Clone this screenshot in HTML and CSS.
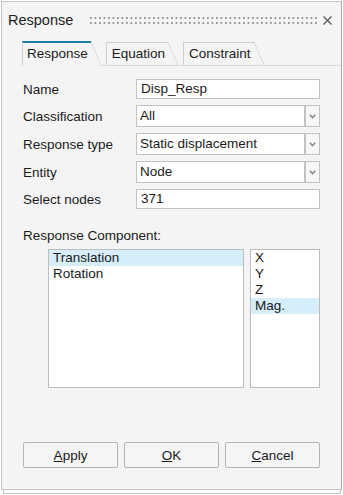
FILE: index.html
```html
<!DOCTYPE html>
<html lang="en">
<head>
  <meta charset="UTF-8" />
  <title>Response</title>
  <link rel="stylesheet" href="styles.css">
</head>
<body>
<div class="window">
  <div class="titlebar">
    <span class="title">Response</span>
    <span class="grip"></span>
    <svg class="close" width="9" height="9" viewBox="0 0 9 9">
      <path d="M0.5 0.5 L8.5 8.5 M8.5 0.5 L0.5 8.5" stroke="#555" stroke-width="1.2" fill="none"/>
    </svg>
  </div>

  <div class="tabs">
    <div class="tab active">Response</div>
    <div class="tab">Equation</div>
    <div class="tab">Constraint</div>
  </div>

  <div class="form">
    <label>Name</label>
    <div class="input">Disp_Resp</div>

    <label>Classification</label>
    <div class="select">
      <div class="select-box">All</div>
      <div class="select-btn"><svg width="7" height="5" viewBox="0 0 7 5"><path d="M0.8 0.8 L3.5 3.6 L6.2 0.8" stroke="#8c8c8c" stroke-width="1.6" fill="none"/></svg></div>
    </div>

    <label>Response type</label>
    <div class="select">
      <div class="select-box">Static displacement</div>
      <div class="select-btn"><svg width="7" height="5" viewBox="0 0 7 5"><path d="M0.8 0.8 L3.5 3.6 L6.2 0.8" stroke="#8c8c8c" stroke-width="1.6" fill="none"/></svg></div>
    </div>

    <label>Entity</label>
    <div class="select">
      <div class="select-box">Node</div>
      <div class="select-btn"><svg width="7" height="5" viewBox="0 0 7 5"><path d="M0.8 0.8 L3.5 3.6 L6.2 0.8" stroke="#8c8c8c" stroke-width="1.6" fill="none"/></svg></div>
    </div>

    <label>Select nodes</label>
    <div class="input">371</div>
  </div>

  <div class="comp-label">Response Component:</div>
  <div class="lists">
    <ul class="list list-main">
      <li class="selected">Translation</li>
      <li>Rotation</li>
    </ul>
    <ul class="list list-dir">
      <li>X</li>
      <li>Y</li>
      <li>Z</li>
      <li class="selected">Mag.</li>
    </ul>
  </div>

  <div class="buttons">
    <button><u>A</u>pply</button>
    <button><u>O</u>K</button>
    <button><u>C</u>ancel</button>
  </div>
</div>
<div class="under"></div>
</body>
</html>
```

FILE: styles.css
```css
body {
  margin: 0;
  background: #fff;
  font-family: "Liberation Sans", Arial, sans-serif;
  font-size: 13.5px;
  color: #1a1a1a;
}
.window {
  box-sizing: border-box;
  margin: 1px 0 0 1px;
  width: 341px;
  height: 489px;
  background: #f4f4f4;
  border: 1px solid #c4c4c4;
  border-right-color: #a9a9a9;
}

.titlebar {
  display: flex;
  align-items: center;
  height: 35px;
  padding: 0 9px 0 6px;
}
.title { font-size: 14.5px; color: #222; }
.grip {
  flex: 1;
  height: 7px;
  margin: 2px 6px 0 17px;
  background-image: conic-gradient(at 2px 2px, transparent 75%, #9a9a9a 0);
  background-size: 4.5px 5px;
}
.close { display: block; margin-top: 1px; }

.tabs {
  display: flex;
  margin: 5px 0 0 20px;
  border-bottom: 1px solid #dadada;
}
.tab {
  position: relative;
  height: 22px;
  line-height: 22px;
  padding: 0 3px 0 5px;
  margin-right: 15px;
  border-top: 1px solid #cfcfcf;
  border-left: 1px solid #cfcfcf;
}
.tab::after {
  content: '';
  position: absolute;
  top: -1px;
  right: -10px;
  bottom: 0;
  width: 10px;
  background: linear-gradient(to top right, transparent calc(50% - 0.6px), #cfcfcf 50%, transparent calc(50% + 0.6px));
}
.tab.active {
  height: 22px;
  line-height: 22px;
  padding-left: 4px;
  border-top: 2px solid #1d7fa6;
  margin-bottom: -1px;
  border-bottom: 1px solid #f4f4f4;
  margin-top: -1px;
}
.tab.active::after {
  top: -2px;
  bottom: -1px;
  background: linear-gradient(to top right, transparent calc(50% - 0.6px), #cfcfcf 50%, transparent calc(50% + 0.6px)),
              linear-gradient(#f4f4f4, #f4f4f4) left bottom / 100% 1px no-repeat;
}

.form {
  display: grid;
  grid-template-columns: 113px 1fr;
  row-gap: 6px;
  align-items: center;
  margin-top: 13px;
  padding: 0 21px;
}
.input {
  box-sizing: border-box;
  height: 20px;
  line-height: 18px;
  padding-left: 4px;
  background: #fff;
  border: 1px solid #c2c2c2;
}
.select {
  display: flex;
  height: 22px;
}
.select-box {
  flex: 1;
  line-height: 20px;
  padding-left: 3px;
  background: #fff;
  border: 1px solid #c2c2c2;
}
.select-btn {
  box-sizing: border-box;
  width: 15px;
  display: flex;
  align-items: center;
  justify-content: center;
  background: #f7f7f7;
  border: 1px solid #c2c2c2;
}

.comp-label {
  margin: 19px 21px 0;
  line-height: 16px;
}
.lists {
  display: flex;
  gap: 6px;
  margin: 5px 21px 0 46px;
}
.list {
  box-sizing: border-box;
  list-style: none;
  margin: 0;
  padding: 0;
  height: 139px;
  background: #fff;
  border: 1px solid #bcbcbc;
}
.list-main { width: 196px; }
.list-dir { flex: 1; }
.list li {
  height: 16px;
  line-height: 16px;
  padding-left: 4px;
}
.list li.selected { background: #d6eef9; }

.buttons {
  display: grid;
  grid-template-columns: 1fr 1fr 1fr;
  gap: 6px;
  margin: 54px 21px 0;
}
.buttons button {
  height: 26px;
  font: inherit;
  color: #1a1a1a;
  background: #f5f5f5;
  border: 1px solid #b4b4b4;
  border-radius: 2px;
}

.under {
  box-sizing: border-box;
  margin-left: 3px;
  width: 338px;
  height: 4px;
  border: 1px solid #c6c6c6;
  border-top: 0;
}
```
